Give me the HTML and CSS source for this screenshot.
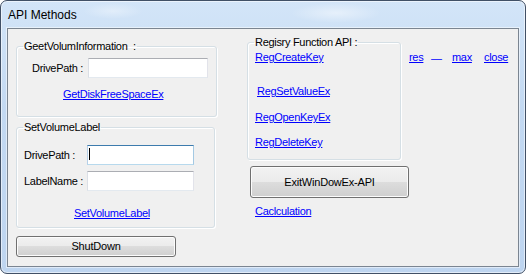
FILE: index.html
```html
<!DOCTYPE html>
<html>
<head>
<meta charset="utf-8">
<link rel="stylesheet" href="styles.css">
</head>
<body>
<div class="window">
  <div class="titlebar">API Methods</div>
  <div class="client">
    <div class="col-left">
      <fieldset class="group g1">
        <legend>GeetVolumInformation&nbsp; :</legend>
        <div class="row r1">
          <span class="lbl l1">DrivePath :</span>
          <div class="textbox tb1"></div>
        </div>
        <a class="link link1" href="#">GetDiskFreeSpaceEx</a>
      </fieldset>
      <fieldset class="group g2">
        <legend>SetVolumeLabel</legend>
        <div class="row r2">
          <span class="lbl l2">DrivePath :</span>
          <div class="textbox tb2 focused"><span class="caret"></span></div>
        </div>
        <div class="row r2 r2b">
          <span class="lbl l2">LabelName :</span>
          <div class="textbox tb2"></div>
        </div>
        <a class="link link2" href="#">SetVolumeLabel</a>
      </fieldset>
      <div class="button btn-shut">ShutDown</div>
    </div>
    <div class="col-right">
      <fieldset class="group g3">
        <legend>Regisry Function API :</legend>
        <div class="reglinks">
          <a class="link rk1" href="#">RegCreateKey</a>
          <a class="link rk2" href="#">RegSetValueEx</a>
          <a class="link rk3" href="#">RegOpenKeyEx</a>
          <a class="link rk4" href="#">RegDeleteKey</a>
        </div>
      </fieldset>
      <div class="button btn-exit">ExitWinDowEx-API</div>
      <a class="link calc" href="#">Caclculation</a>
    </div>
    <div class="col-links">
      <a class="link wl w-res" href="#">res</a>
      <span class="wl w-dash">—</span>
      <a class="link wl w-max" href="#">max</a>
      <a class="link wl w-close" href="#">close</a>
    </div>
  </div>
</div>
</body>
</html>
```

FILE: styles.css
```css
html, body {
  margin: 0;
  padding: 0;
  width: 526px;
  height: 274px;
  overflow: hidden;
  background: #ffffff;
}

.window {
  box-sizing: border-box;
  width: 526px;
  height: 274px;
  border: 1px solid #415066;
  border-radius: 7px;
  background:
    radial-gradient(ellipse 45px 10px at 335px 12px, rgba(255,255,255,0.45), rgba(255,255,255,0)),
    radial-gradient(ellipse 30px 8px at 112px 10px, rgba(255,255,255,0.35), rgba(255,255,255,0)),
    linear-gradient(#d3e5f8, #c3d9f2 40%, #bed5f0);
  box-shadow: inset 0 0 0 1px rgba(255,255,255,0.55);
  padding: 0 6px 6px 6px;
  display: flex;
  flex-direction: column;
  font-family: "Liberation Sans", Arial, sans-serif;
  color: #000;
}

.titlebar {
  box-sizing: border-box;
  height: 27px;
  padding: 7px 0 0 1px;
  font-size: 12px;
  line-height: 14px;
  color: #000;
}

.client {
  flex: 1;
  display: flex;
  align-items: flex-start;
  border: 1px solid #7b8591;
  background: #f0f0f0;
  padding: 0 0 0 8px;
  font-size: 11px;
  line-height: 13px;
  letter-spacing: -0.3px;
  box-shadow: 0 0 0 1px rgba(255,255,255,0.5);
}

/* group boxes */
.group {
  box-sizing: border-box;
  margin: 0;
  padding: 0;
  min-width: 0;
  border: 1px solid #d5dfe5;
  border-radius: 3px;
  box-shadow: inset 1px 1px 0 #ffffff, 1px 1px 0 #ffffff;
}

.group legend {
  margin-left: 6px;
  padding: 0 1px;
  line-height: 13px;
  font-size: 11px;
}

.col-left {
  width: 201px;
  display: flex;
  flex-direction: column;
}

.g1 {
  width: 201px;
  margin-top: 11px;
  padding: 5px 0 15px 0;
}

.g2 {
  width: 199px;
  margin-top: 4px;
  padding: 11px 0 7px 0;
}

.row {
  display: flex;
  align-items: center;
}

.r1 { padding-left: 15px; }
.l1 { width: 56px; }

.r2 { padding-left: 7px; }
.r2b { margin-top: 6px; }
.l2 { width: 63px; }

.textbox {
  box-sizing: border-box;
  height: 20px;
  background: #ffffff;
  border: 1px solid;
  border-color: #abadb3 #e2e3ea #e3e9ef #dbdfe6;
  position: relative;
}

.tb1 { width: 120px; }
.tb2 { width: 107px; }

.textbox.focused {
  border-color: #3d7bad #a4c9e3 #b7d9ed #b5cfe7;
}

.caret {
  position: absolute;
  left: 1px;
  top: 2px;
  width: 1px;
  height: 12px;
  background: #000;
}

.link {
  color: #0000ff;
  text-decoration: underline;
  display: block;
  width: fit-content;
}

.link1 {
  margin: 10px 0 0 46px;
}

.link2 {
  margin: 16px 0 0 57px;
}

/* buttons */
.button {
  box-sizing: border-box;
  border: 1px solid #707070;
  border-radius: 3px;
  background: linear-gradient(#f2f2f2 0%, #ebebeb 50%, #dddddd 50%, #cfcfcf 100%);
  box-shadow: inset 0 0 0 1px #fcfcfc;
  display: flex;
  align-items: center;
  justify-content: center;
  color: #000;
  letter-spacing: -0.2px;
}

.btn-shut {
  width: 160px;
  height: 21px;
  margin-top: 8px;
}

.col-right {
  width: 162px;
  margin-left: 30px;
  display: flex;
  flex-direction: column;
}

.g3 {
  width: 154px;
  margin-top: 7px;
  padding: 2px 0 10px 0;
}

.reglinks {
  display: flex;
  flex-direction: column;
  align-items: flex-start;
}

.rk1 { margin-left: 7px; }
.rk2 { margin-left: 9px; margin-top: 21px; }
.rk3 { margin-left: 7px; margin-top: 13px; }
.rk4 { margin-left: 7px; margin-top: 12px; }

.btn-exit {
  width: 159px;
  height: 32px;
  margin: 6px 0 0 3px;
}

.calc {
  margin: 7px 0 0 8px;
}

.col-links {
  display: flex;
  margin-top: 22px;
}

.wl {
  display: block;
}

.w-res { width: 22px; }
.w-dash {
  width: 21px;
  color: #0000ff;
  letter-spacing: 0;
  position: relative;
  top: 1px;
}
.w-max { width: 32px; }
.w-close { width: auto; }
```
